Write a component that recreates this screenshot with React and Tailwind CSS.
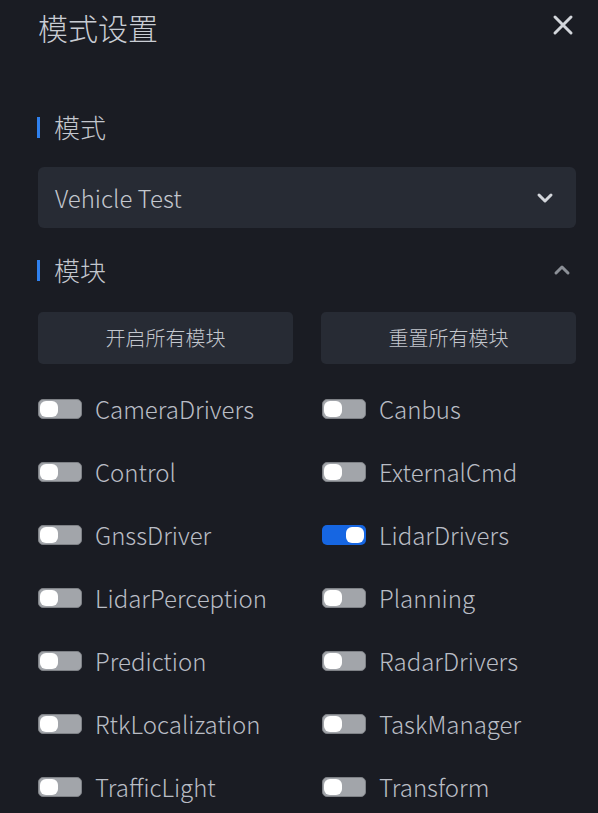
const modules = [
  ['CameraDrivers', false], ['Canbus', false],
  ['Control', false], ['ExternalCmd', false],
  ['GnssDriver', false], ['LidarDrivers', true],
  ['LidarPerception', false], ['Planning', false],
  ['Prediction', false], ['RadarDrivers', false],
  ['RtkLocalization', false], ['TaskManager', false],
  ['TrafficLight', false], ['Transform', false],
];

const Toggle = ({ on }) => (
  <span className={on
    ? 'flex h-[20px] w-[44px] shrink-0 items-center justify-end rounded-[5px] bg-[#1666e2] px-[2px]'
    : 'flex h-[20px] w-[44px] shrink-0 items-center justify-start rounded-[5px] border border-[#7e8186] bg-[#a2a5aa] px-[1px]'}>
    <span className="h-[16px] w-[18px] rounded-[6px] bg-white" />
  </span>
);

const SectionTitle = ({ children, right }) => (
  <div className="flex h-[30px] items-center justify-between">
    <div className="flex items-center">
      <span className="ml-[-1px] h-[21px] w-[3px] bg-[#2f80ed]" />
      <span className="ml-[14px] text-[26px] leading-none font-light text-[#c3c7ce]">{children}</span>
    </div>
    {right}
  </div>
);

export default function App() {
  return (
    <div className="h-[813px] w-[598px] overflow-hidden bg-[#1a1c23] pl-[38px] pr-[22px]" style={{ fontFamily: '"Noto Sans CJK SC", "Noto Sans", sans-serif' }}>
      <div className="flex h-[54px] items-center justify-between">
        <h1 className="text-[30px] leading-none font-light text-[#c9cdd4]">模式设置</h1>
        <svg width="22" height="22" viewBox="0 0 22 22" className="mr-[2px] mt-[-4px]" fill="none" stroke="#d3d6db" strokeWidth="3" strokeLinecap="round">
          <path d="M3 3 L19 19 M19 3 L3 19" />
        </svg>
      </div>

      <div className="mt-[58px]">
        <SectionTitle>模式</SectionTitle>
      </div>

      <div className="mt-[25px] flex h-[61px] items-center justify-between rounded-[6px] bg-[#272b34] pl-[17px] pr-[22px]">
        <span className="text-[24px] leading-none font-light text-[#c3c7ce]">Vehicle Test</span>
        <svg width="18" height="12" viewBox="0 0 18 12" fill="none" stroke="#d3d6db" strokeWidth="3" strokeLinecap="round" strokeLinejoin="round">
          <path d="M3 3 L9 9 L15 3" />
        </svg>
      </div>

      <div className="mt-[27px]">
        <SectionTitle right={
          <svg width="18" height="12" viewBox="0 0 18 12" className="mr-[5px]" fill="none" stroke="#8c9097" strokeWidth="3" strokeLinecap="round" strokeLinejoin="round">
            <path d="M3 9 L9 3 L15 9" />
          </svg>
        }>模块</SectionTitle>
      </div>

      <div className="mt-[27px] grid grid-cols-2 gap-x-[28px]">
        <button type="button" className="h-[52px] rounded-[5px] bg-[#272b34] text-[20px] font-light text-[#c3c7ce]">开启所有模块</button>
        <button type="button" className="h-[52px] rounded-[5px] bg-[#272b34] text-[20px] font-light text-[#c3c7ce]">重置所有模块</button>
      </div>

      <div className="mt-[13px] grid grid-cols-2 gap-x-[30px]">
        {modules.map(([name, on]) => (
          <div key={name} className="flex h-[63px] items-center">
            <Toggle on={on} />
            <span className="ml-[13px] text-[24px] leading-none font-light text-[#b9bdc5]">{name}</span>
          </div>
        ))}
      </div>
    </div>
  );
}
